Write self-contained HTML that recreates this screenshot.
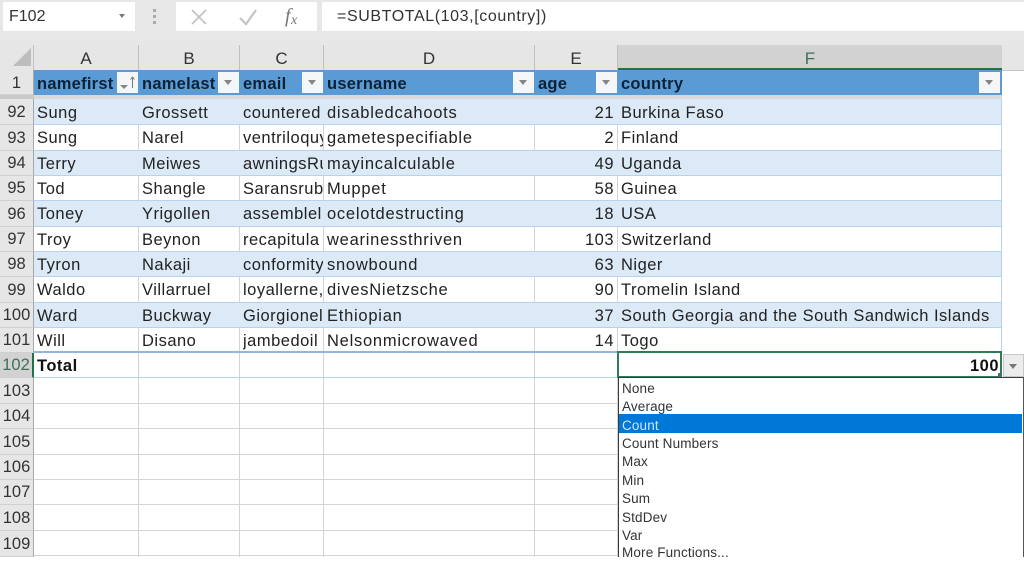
<!DOCTYPE html>
<html><head><meta charset="utf-8">
<style>
html,body{margin:0;padding:0}
body{width:1024px;height:557px;overflow:hidden;background:#fff;position:relative;font-family:"Liberation Sans",sans-serif;color:#1a1a1a}
div{position:absolute;box-sizing:border-box}
.t{white-space:nowrap;overflow:hidden;font-size:16.5px;height:25px;line-height:28px;color:#222;letter-spacing:.5px}
.d{letter-spacing:.75px}
.b{font-weight:bold;color:#0c2238;line-height:26px;letter-spacing:.25px}
.ch{top:45px;height:25px;background:#e6e6e6;border-right:1px solid #c0c0c0;text-align:center;font-size:17px;line-height:28px;color:#333}
.rh{left:0;width:34px;background:#e6e6e6;text-align:center;font-size:16.5px;color:#333;border-bottom:1px solid #d0d0d0;border-right:1px solid #a8a8a8}
.fb{top:72px;width:21px;height:21px;background:#f4f6f8}
.fb:after{content:"";position:absolute;left:6px;top:8px;border:4.5px solid transparent;border-top:5px solid #858585;border-bottom:0}
.l{background:#d4d4d4}
.h{left:34px;width:968px;height:1px;background:#b6d2ee}
.m{left:622px;font-size:13.5px;line-height:19px;height:18px;color:#333;white-space:nowrap;letter-spacing:.15px}
</style></head><body>
<!-- ribbon -->
<div style="left:0;top:0;width:1024px;height:45px;background:#e7e7e7"></div>
<div style="left:3px;top:2px;width:132px;height:29px;background:#fff;font-size:16px;line-height:30px;padding-left:6px;color:#333">F102</div>
<div style="left:119px;top:14px;border:3.5px solid transparent;border-top:4px solid #777;border-bottom:0"></div>
<div style="left:153px;top:9px;width:3px;height:3px;background:#aaa"></div>
<div style="left:153px;top:15px;width:3px;height:3px;background:#aaa"></div>
<div style="left:153px;top:21px;width:3px;height:3px;background:#aaa"></div>
<div style="left:176px;top:2px;width:141px;height:29px;background:#fff"></div>
<svg style="position:absolute;left:176px;top:2px" width="141" height="29"><path d="M16 8L30 22M30 8L16 22" stroke="#c4c4c4" stroke-width="1.8" fill="none"/><path d="M64 16L70 22L80 8" stroke="#c4c4c4" stroke-width="2.2" fill="none"/><text x="109" y="20" font-family="Liberation Serif" font-style="italic" font-size="20" fill="#777">f</text><text x="115" y="22" font-family="Liberation Serif" font-style="italic" font-size="14" fill="#777">x</text></svg>
<div style="left:322px;top:2px;width:702px;height:29px;background:#fff;font-size:16px;line-height:30px;padding-left:15px;color:#333;letter-spacing:.6px">=SUBTOTAL(103,[country])</div>

<!-- column headers -->
<div style="left:0;top:45px;width:34px;height:25px;background:#e6e6e6;border-right:1px solid #c0c0c0"></div>
<div style="left:13px;top:48px;width:0;height:0;border-style:solid;border-width:0 0 18px 18px;border-color:transparent transparent #bdbdbd transparent"></div>
<div class="ch" style="left:34px;width:105px">A</div>
<div class="ch" style="left:139px;width:101px">B</div>
<div class="ch" style="left:240px;width:84px">C</div>
<div class="ch" style="left:324px;width:211px">D</div>
<div class="ch" style="left:535px;width:83px">E</div>
<div class="ch" style="left:618px;width:384px;background:#d2d2d2;border:0;color:#3f6f55">F</div>
<div style="left:618px;top:68px;width:384px;height:2px;background:#217346"></div>
<div style="left:1002px;top:45px;width:22px;height:25px;background:#e6e6e6"></div>
<div style="left:0;top:70px;width:1024px;height:1px;background:#c6c6c6"></div>

<!-- grid verticals (stripes paint over them) -->
<div class="l" style="left:138px;top:99px;width:1px;height:458px"></div>
<div class="l" style="left:239px;top:99px;width:1px;height:458px"></div>
<div class="l" style="left:323px;top:99px;width:1px;height:458px"></div>
<div class="l" style="left:534px;top:99px;width:1px;height:458px"></div>
<div class="l" style="left:617px;top:99px;width:1px;height:458px"></div>
<div class="l" style="left:1001px;top:352px;width:1px;height:25px"></div>

<!-- row stripes -->
<div style="left:34px;top:99px;width:968px;height:26px;background:#dce9f6"></div>
<div style="left:34px;top:150px;width:968px;height:25px;background:#dce9f6"></div>
<div style="left:34px;top:200px;width:968px;height:26px;background:#dce9f6"></div>
<div style="left:34px;top:251px;width:968px;height:25px;background:#dce9f6"></div>
<div style="left:34px;top:302px;width:968px;height:25px;background:#dce9f6"></div>

<!-- horizontal lines -->
<div class="h" style="top:124px"></div>
<div class="h" style="top:150px"></div>
<div class="h" style="top:175px"></div>
<div class="h" style="top:200px"></div>
<div class="h" style="top:226px"></div>
<div class="h" style="top:251px"></div>
<div class="h" style="top:276px"></div>
<div class="h" style="top:302px"></div>
<div class="h" style="top:327px"></div>
<div style="left:34px;top:351px;width:968px;height:2px;background:#8fb8e0"></div>
<div class="h" style="top:377px"></div>
<div class="l" style="left:34px;top:403px;width:584px;height:1px"></div>
<div class="l" style="left:34px;top:428px;width:584px;height:1px"></div>
<div class="l" style="left:34px;top:454px;width:584px;height:1px"></div>
<div class="l" style="left:34px;top:479px;width:584px;height:1px"></div>
<div class="l" style="left:34px;top:504px;width:584px;height:1px"></div>
<div class="l" style="left:34px;top:530px;width:584px;height:1px"></div>
<div class="l" style="left:34px;top:555px;width:584px;height:1px"></div>
<div style="left:1001px;top:99px;width:1px;height:253px;background:#b6d2ee"></div>

<!-- table header -->
<div style="left:34px;top:70px;width:968px;height:25px;background:#5b9bd5"></div>
<div style="left:34px;top:95px;width:968px;height:4px;background:#d9d9d9"></div>
<div style="left:0;top:95px;width:34px;height:4px;background:#c9c9c9"></div>
<div class="t b" style="left:37px;top:71px;width:80px">namefirst</div>
<div class="t b" style="left:142px;top:71px;width:76px">namelast</div>
<div class="t b" style="left:243px;top:71px;width:60px">email</div>
<div class="t b" style="left:327px;top:71px;width:180px">username</div>
<div class="t b" style="left:538px;top:71px;width:50px">age</div>
<div class="t b" style="left:621px;top:71px;width:200px">country</div>
<div style="left:117px;top:72px;width:21px;height:21px;background:#f4f6f8"></div>
<div style="left:120px;top:85px;border:4px solid transparent;border-top:4px solid #858585;border-bottom:0"></div>
<svg style="position:absolute;left:128px;top:74px" width="9" height="16"><path d="M4.5 14V3M2.5 5.5L4.5 3L6.5 5.5" stroke="#777" stroke-width="1" fill="none"/></svg>
<div class="fb" style="left:218px"></div>
<div class="fb" style="left:302px"></div>
<div class="fb" style="left:513px"></div>
<div class="fb" style="left:596px"></div>
<div class="fb" style="left:979px"></div>

<!-- row headers -->
<div class="rh" style="top:70px;height:25px;line-height:27px">1</div>
<div class="rh" style="top:99px;height:26px;line-height:27px">92</div>
<div class="rh" style="top:125px;height:26px;line-height:26px">93</div>
<div class="rh" style="top:151px;height:25px;line-height:25px">94</div>
<div class="rh" style="top:176px;height:25px;line-height:25px">95</div>
<div class="rh" style="top:201px;height:26px;line-height:26px">96</div>
<div class="rh" style="top:227px;height:25px;line-height:25px">97</div>
<div class="rh" style="top:252px;height:25px;line-height:25px">98</div>
<div class="rh" style="top:277px;height:26px;line-height:26px">99</div>
<div class="rh" style="top:303px;height:25px;line-height:25px">100</div>
<div class="rh" style="top:328px;height:25px;line-height:25px">101</div>
<div class="rh" style="top:353px;height:25px;line-height:25px;background:#d2d2d2;color:#3f6f55;border-right:2px solid #217346">102</div>
<div class="rh" style="top:378px;height:26px;line-height:26px">103</div>
<div class="rh" style="top:404px;height:25px;line-height:25px">104</div>
<div class="rh" style="top:429px;height:26px;line-height:26px">105</div>
<div class="rh" style="top:455px;height:25px;line-height:25px">106</div>
<div class="rh" style="top:480px;height:25px;line-height:25px">107</div>
<div class="rh" style="top:505px;height:26px;line-height:26px">108</div>
<div class="rh" style="top:531px;height:26px;line-height:26px">109</div>

<!-- row 92 -->
<div class="t" style="left:37px;top:99px;width:100px">Sung</div><div class="t" style="left:142px;top:99px;width:96px">Grossett</div><div class="t" style="left:243px;top:99px;width:82px">countered</div><div class="t d" style="left:327px;top:99px;width:206px">disabledcahoots</div><div class="t" style="left:535px;top:99px;width:79px;text-align:right">21</div><div class="t" style="left:621px;top:99px;width:380px">Burkina Faso</div>
<!-- 93 -->
<div class="t" style="left:37px;top:124px;width:100px">Sung</div><div class="t" style="left:142px;top:124px;width:96px">Narel</div><div class="t" style="left:243px;top:124px;width:80px">ventriloquy</div><div class="t d" style="left:327px;top:124px;width:206px">gametespecifiable</div><div class="t" style="left:535px;top:124px;width:79px;text-align:right">2</div><div class="t" style="left:621px;top:124px;width:380px">Finland</div>
<!-- 94 -->
<div class="t" style="left:37px;top:150px;width:100px">Terry</div><div class="t" style="left:142px;top:150px;width:96px">Meiwes</div><div class="t" style="left:243px;top:150px;width:80px">awningsRu</div><div class="t d" style="left:327px;top:150px;width:206px">mayincalculable</div><div class="t" style="left:535px;top:150px;width:79px;text-align:right">49</div><div class="t" style="left:621px;top:150px;width:380px">Uganda</div>
<!-- 95 -->
<div class="t" style="left:37px;top:175px;width:100px">Tod</div><div class="t" style="left:142px;top:175px;width:96px">Shangle</div><div class="t" style="left:243px;top:175px;width:80px">Saransrub</div><div class="t d" style="left:327px;top:175px;width:206px">Muppet</div><div class="t" style="left:535px;top:175px;width:79px;text-align:right">58</div><div class="t" style="left:621px;top:175px;width:380px">Guinea</div>
<!-- 96 -->
<div class="t" style="left:37px;top:200px;width:100px">Toney</div><div class="t" style="left:142px;top:200px;width:96px">Yrigollen</div><div class="t" style="left:243px;top:200px;width:80px">assemblel</div><div class="t d" style="left:327px;top:200px;width:206px">ocelotdestructing</div><div class="t" style="left:535px;top:200px;width:79px;text-align:right">18</div><div class="t" style="left:621px;top:200px;width:380px">USA</div>
<!-- 97 -->
<div class="t" style="left:37px;top:226px;width:100px">Troy</div><div class="t" style="left:142px;top:226px;width:96px">Beynon</div><div class="t" style="left:243px;top:226px;width:80px">recapitula</div><div class="t d" style="left:327px;top:226px;width:206px">wearinessthriven</div><div class="t" style="left:535px;top:226px;width:79px;text-align:right">103</div><div class="t" style="left:621px;top:226px;width:380px">Switzerland</div>
<!-- 98 -->
<div class="t" style="left:37px;top:251px;width:100px">Tyron</div><div class="t" style="left:142px;top:251px;width:96px">Nakaji</div><div class="t" style="left:243px;top:251px;width:80px">conformity</div><div class="t d" style="left:327px;top:251px;width:206px">snowbound</div><div class="t" style="left:535px;top:251px;width:79px;text-align:right">63</div><div class="t" style="left:621px;top:251px;width:380px">Niger</div>
<!-- 99 -->
<div class="t" style="left:37px;top:276px;width:100px">Waldo</div><div class="t" style="left:142px;top:276px;width:96px">Villarruel</div><div class="t" style="left:243px;top:276px;width:80px">loyallerne,</div><div class="t d" style="left:327px;top:276px;width:206px">divesNietzsche</div><div class="t" style="left:535px;top:276px;width:79px;text-align:right">90</div><div class="t" style="left:621px;top:276px;width:380px">Tromelin Island</div>
<!-- 100 -->
<div class="t" style="left:37px;top:302px;width:100px">Ward</div><div class="t" style="left:142px;top:302px;width:96px">Buckway</div><div class="t" style="left:243px;top:302px;width:80px">Giorgionel</div><div class="t d" style="left:327px;top:302px;width:206px">Ethiopian</div><div class="t" style="left:535px;top:302px;width:79px;text-align:right">37</div><div class="t" style="left:621px;top:302px;width:380px">South Georgia and the South Sandwich Islands</div>
<!-- 101 -->
<div class="t" style="left:37px;top:327px;width:100px">Will</div><div class="t" style="left:142px;top:327px;width:96px">Disano</div><div class="t" style="left:243px;top:327px;width:80px">jambedoil</div><div class="t d" style="left:327px;top:327px;width:206px">Nelsonmicrowaved</div><div class="t" style="left:535px;top:327px;width:79px;text-align:right">14</div><div class="t" style="left:621px;top:327px;width:380px">Togo</div>
<!-- total -->
<div class="t" style="left:37px;top:352px;width:100px;font-weight:bold;color:#111">Total</div>
<div style="left:617px;top:351px;width:385px;height:27px;border:2px solid #2f7d55;background:#fff"></div>
<div class="t" style="left:900px;top:352px;width:99px;text-align:right;font-weight:bold;color:#111">100</div>
<div style="left:1003px;top:354px;width:21px;height:23px;background:#ececec;border:1px solid #c8c8c8"></div>
<div style="left:1009px;top:364px;border:4.5px solid transparent;border-top:5px solid #777;border-bottom:0"></div>

<!-- dropdown -->
<div style="left:618px;top:377px;width:406px;height:180px;background:#fff;border:1px solid #3a3a3a;border-bottom:0;border-right:1px solid #555"></div>
<div style="left:998px;top:373px;width:4px;height:4px;background:#4a6f62"></div>
<div style="left:619px;top:414px;width:403px;height:19px;background:#0078d7"></div>
<div class="m" style="top:379px">None</div>
<div class="m" style="top:397px">Average</div>
<div class="m" style="top:416px;color:#cfe6fa">Count</div>
<div class="m" style="top:434px">Count Numbers</div>
<div class="m" style="top:452px">Max</div>
<div class="m" style="top:471px">Min</div>
<div class="m" style="top:489px">Sum</div>
<div class="m" style="top:508px">StdDev</div>
<div class="m" style="top:526px">Var</div>
<div class="m" style="top:543px">More Functions...</div>
</body></html>
